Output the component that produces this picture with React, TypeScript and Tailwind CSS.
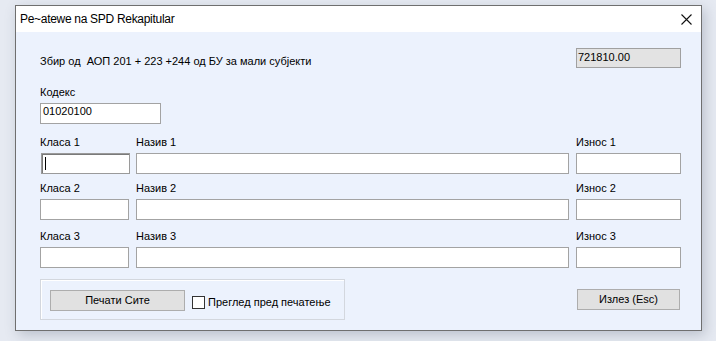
import React from "react";

const field = "h-[21px] bg-white border border-[#a3a3a3]";
const label = "h-[13px] text-[11px] leading-[13px] text-black";

function Row({ n, focused }: { n: number; focused?: boolean }) {
  return (
    <div className="flex flex-col">
      <div className="flex">
        <div className={`${label} w-[96px]`}>Класа {n}</div>
        <div className={`${label} w-[440px]`}>Назив {n}</div>
        <div className={label}>Износ {n}</div>
      </div>
      <div className="flex mt-[4px]">
        {focused ? (
          <div className="w-[89px] h-[21px] ml-[1px] mr-[6px] bg-white border border-[#9a9a9a] shadow-[inset_1px_1px_0_#7a7a7a] flex items-center pl-[3px]">
            <div className="w-px h-[13px] bg-black" />
          </div>
        ) : (
          <div className={`${field} w-[89px] mr-[7px]`} />
        )}
        <div className={`${field} w-[433px] mr-[7px]`} />
        <div className={`${field} w-[105px]`} />
      </div>
    </div>
  );
}

export default function App() {
  return (
    <div
      className="w-[716px] h-[341px] bg-[#e6eaf2] overflow-hidden pt-[5px] pl-[15px]"
      style={{ fontFamily: '"Liberation Sans", Arial, sans-serif' }}
    >
      <div className="w-[687px] h-[326px] border border-[#6f6f6f] bg-[#ecf2fd] flex flex-col shadow-[3px_4px_12px_rgba(60,70,90,0.25)]">
        {/* title bar */}
        <div className="h-[26px] bg-white flex items-center justify-between pl-[4px] pr-[9px] shrink-0">
          <span className="text-[12px] tracking-[-0.3px] text-black">Pe~atewe na SPD Rekapitular</span>
          <svg width="11" height="11" viewBox="0 0 11 11">
            <path d="M0.5 0.5 L10.5 10.5 M10.5 0.5 L0.5 10.5" stroke="#111" strokeWidth="1.1" />
          </svg>
        </div>

        <div className="flex flex-col pl-[24px]">
          {/* sum line */}
          <div className="flex items-center mt-[16px] h-[20px]">
            <span className="w-[536px] text-[11px] leading-[13px] pt-[6px]">
              Збир од&nbsp; АОП 201 + 223 +244 од БУ за мали субјекти
            </span>
            <div className="w-[105px] h-[20px] bg-[#e3e3e3] border border-[#a0a0a0] text-[11px] leading-[16px] pl-[1px]">
              721810.00
            </div>
          </div>

          {/* kodeks */}
          <div className={`${label} mt-[18px]`}>Кодекс</div>
          <div className={`${field} w-[121px] mt-[4px] text-[11px] leading-[15px] pl-[2px]`}>01020100</div>

          <div className="mt-[12px] flex flex-col gap-[8px]">
            <Row n={1} focused />
            <Row n={2} />
            <div className="mt-[2px]">
              <Row n={3} />
            </div>
          </div>

          {/* bottom */}
          <div className="flex items-start mt-[11px]">
            <div className="w-[305px] h-[41px] border border-[#d3d7de] shadow-[inset_1px_1px_0_#ffffff] flex items-start pl-[9px] pt-[10px]">
              <div className="w-[135px] h-[21px] bg-[#e1e1e1] border border-[#adadad] text-[11px] leading-[19px] text-center">
                Печати Сите
              </div>
              <div className="flex items-center mt-[6px] ml-[7px]">
                <div className="w-[13px] h-[13px] bg-white border border-[#333333]" />
                <span className="text-[11px] leading-[13px] ml-[3px]">Преглед пред печатење</span>
              </div>
            </div>
            <div className="ml-[232px] mt-[10px] w-[103px] h-[21px] bg-[#e1e1e1] border border-[#adadad] text-[11px] leading-[19px] text-center">
              Излез (Esc)
            </div>
          </div>
        </div>
      </div>
    </div>
  );
}
